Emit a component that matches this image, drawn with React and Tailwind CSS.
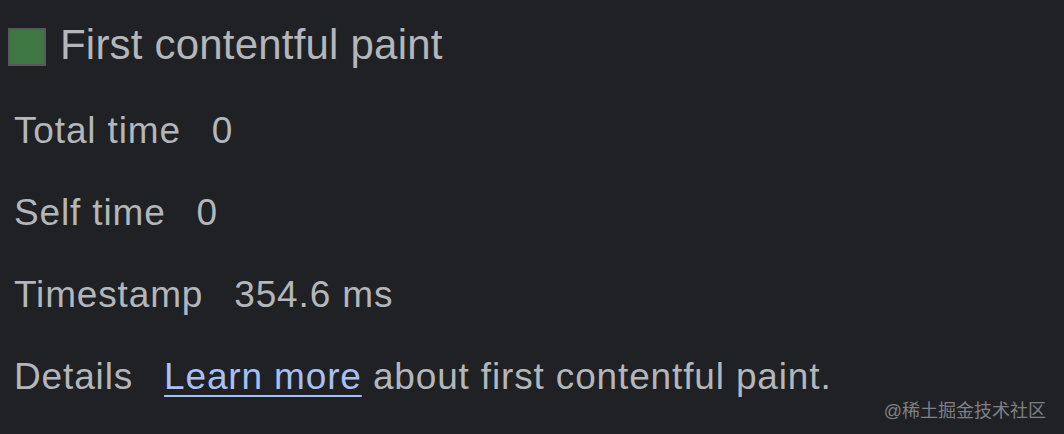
export default function App() {
  const rows = [
    { label: "Total time", value: "0" },
    { label: "Self time", value: "0" },
    { label: "Timestamp", value: "354.6 ms" },
  ]

  return (
    <div
      className="relative w-[1064px] h-[434px] overflow-hidden bg-[#202124] text-[#b3b6ba]"
      style={{ fontFamily: '"Liberation Sans", Arial, sans-serif' }}
    >
      <div className="pt-[24px] pl-[8px]">
        {/* title */}
        <div className="flex items-center gap-[14px] h-[42px]">
          <span className="mt-[3px] w-[38px] h-[38px] bg-[#3e7741] border-2 border-[#55595c] shrink-0" />
          <span className="text-[42px] leading-none tracking-[0.2px] whitespace-nowrap">First contentful paint</span>
        </div>

        <div className="mt-[24px] pl-[6px] text-[37px] tracking-[0.85px]">
          {rows.map((r) => (
            <div key={r.label} className="flex gap-[31px] h-[82px] leading-[82px] whitespace-nowrap">
              <span>{r.label}</span>
              <span>{r.value}</span>
            </div>
          ))}
          <div className="flex gap-[31px] h-[82px] leading-[82px] whitespace-nowrap">
            <span>Details</span>
            <span>
              <a className="text-[#a8c0f5] underline decoration-2 underline-offset-[6px]">Learn more</a> about first
              contentful paint.
            </span>
          </div>
        </div>
      </div>

      {/* watermark */}
      <div
        className="absolute right-[18px] bottom-[14px] text-[18px] leading-none text-[#7e8084]"
        style={{ fontFamily: '"Liberation Sans", "Noto Sans CJK SC", sans-serif' }}
      >
        @稀土掘金技术社区
      </div>
    </div>
  )
}
